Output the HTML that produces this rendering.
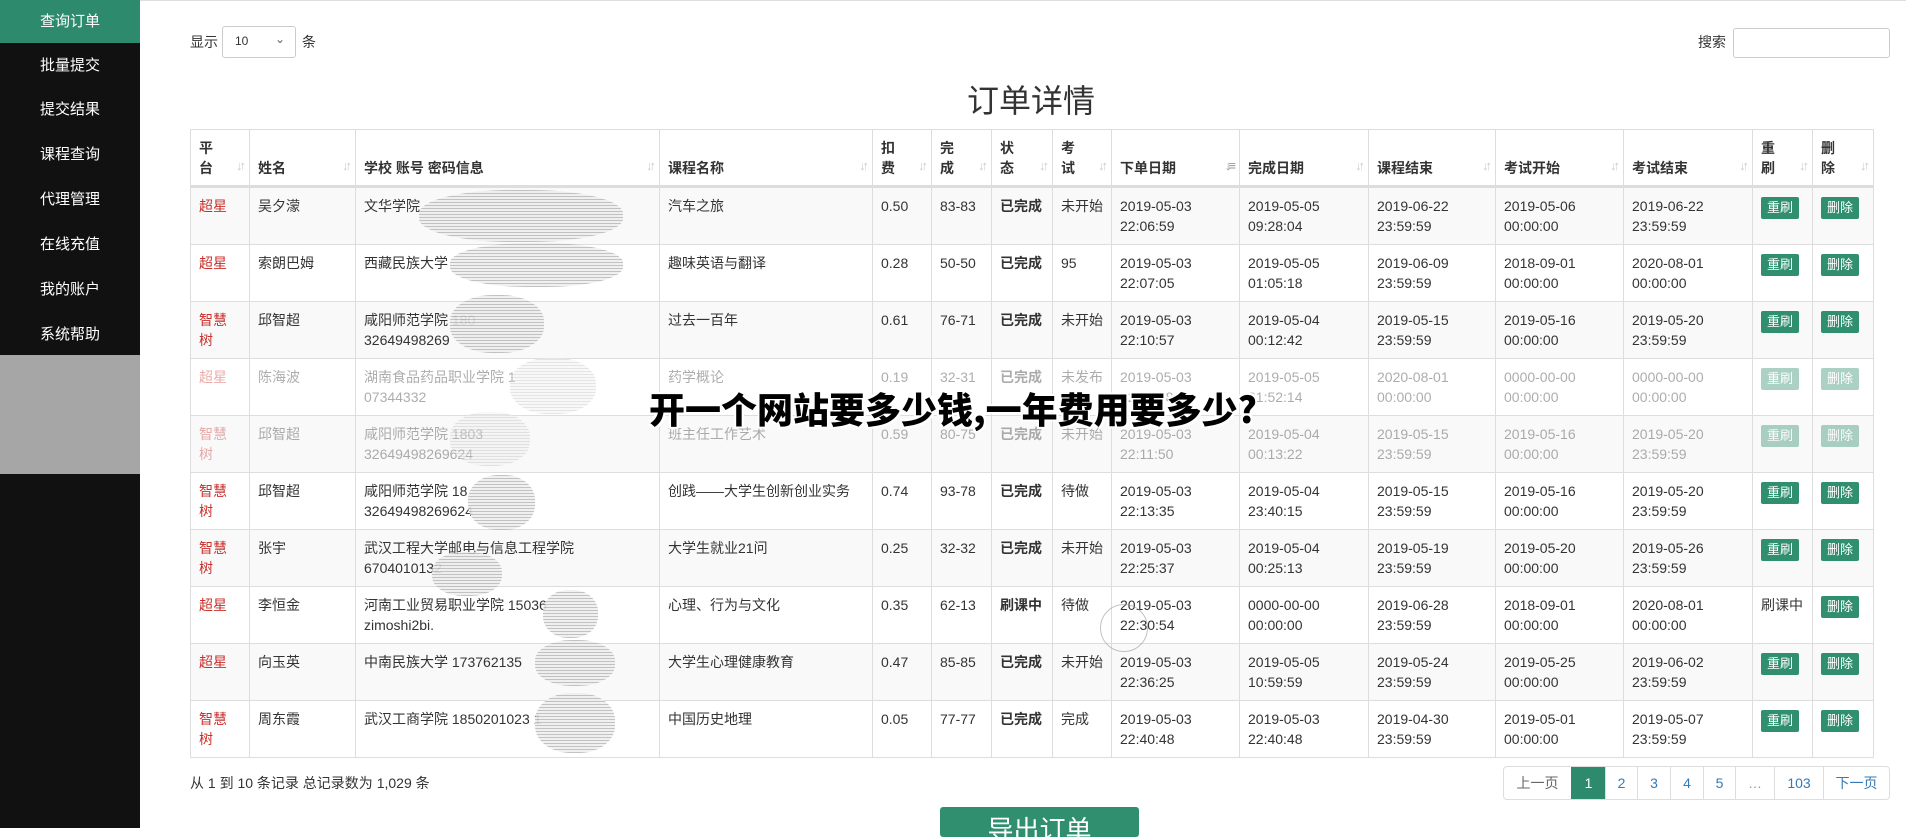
<!DOCTYPE html>
<html><head><meta charset="utf-8">
<style>
*{box-sizing:border-box;margin:0;padding:0}
body{width:1906px;height:828px;overflow:hidden;background:#fff;font-family:"Liberation Sans","Noto Sans CJK SC",sans-serif;color:#333;font-size:14px;position:relative}
.side{position:absolute;left:0;top:0;width:140px;height:828px;background:#111}
.side div{position:absolute;left:0;width:140px;height:45px;line-height:45px;color:#fff;font-size:15px;padding-left:40px}
.side .act{background:#2d8a6c;height:43px;top:0;line-height:43px}
.gray{position:absolute;left:0;top:355px;width:140px;height:119px;background:#a6a6a6}
.topline{position:absolute;left:140px;top:0;right:0;height:1px;background:#ddd}
.abs{position:absolute}
table{position:absolute;left:190px;top:129px;width:1683px;border-collapse:collapse;table-layout:fixed;font-size:14px}
td,th{border:1px solid #ddd;padding:8px 8px;vertical-align:top;line-height:20px;text-align:left;overflow:hidden}
th{font-weight:bold;color:#333;vertical-align:bottom;height:55px;position:relative;border-bottom:3px solid #ddd;padding-bottom:7px}
th i{position:absolute;right:6px;bottom:9px;color:#ccc;font-style:normal;font-size:13px;letter-spacing:-3px}
tbody tr{height:57px}
tbody td{height:57px}
tbody tr:nth-child(odd){background:#f9f9f9}
.r{color:#c9302c}
.b{font-weight:bold}
.btn{display:inline-block;background:#2f8f6e;color:#fff;font-size:13px;padding:2px 6px;border-radius:2px;line-height:18px;margin-top:1px}
.fade td{opacity:.4}
.blob{position:absolute;border-radius:45%;background:repeating-linear-gradient(0deg,#bbb 0 1px,#eee 1px 3px);opacity:.9}
.pg{position:absolute;top:766px;left:1503px;height:34px;display:flex;border:1px solid #ddd;border-radius:4px;overflow:hidden}
.pg span{border-left:1px solid #ddd;line-height:32px;text-align:center;color:#337ab7;font-size:14px}
.pg span:first-child{border-left:none;color:#666}
.title{position:absolute;left:0;width:1906px;top:382px;text-align:center;font-size:36px;font-weight:900;font-family:"Noto Sans CJK SC",sans-serif;color:#000;text-shadow:0 0 3px #fff,0 0 3px #fff,2px 2px 0 #fff,-2px -2px 0 #fff,2px -2px 0 #fff,-2px 2px 0 #fff}
</style></head><body>
<div class="side">
<div class="act">查询订单</div>
<div style="top:43px">批量提交</div>
<div style="top:87px">提交结果</div>
<div style="top:132px">课程查询</div>
<div style="top:177px">代理管理</div>
<div style="top:222px">在线充值</div>
<div style="top:267px">我的账户</div>
<div style="top:312px">系统帮助</div>
</div>
<div class="gray"></div>
<div class="topline"></div>
<div class="abs" style="left:190px;top:32px;font-size:14px">显示</div>
<div class="abs" style="left:222px;top:26px;width:74px;height:32px;border:1px solid #ccc;border-radius:3px;font-size:12px;padding:7px 12px">10<span style="position:absolute;right:10px;top:5px;color:#666">&#8964;</span></div>
<div class="abs" style="left:302px;top:32px">条</div>
<div class="abs" style="left:1698px;top:32px">搜索</div>
<div class="abs" style="left:1733px;top:28px;width:157px;height:30px;border:1px solid #ccc;border-radius:3px"></div>
<div class="abs" style="left:0;width:2062px;top:76px;text-align:center;font-size:32px;color:#333">订单详情</div>
<table>
<colgroup><col style="width:59px"><col style="width:106px"><col style="width:304px"><col style="width:213px"><col style="width:59px"><col style="width:60px"><col style="width:61px"><col style="width:59px"><col style="width:128px"><col style="width:129px"><col style="width:127px"><col style="width:128px"><col style="width:129px"><col style="width:60px"><col style="width:61px"></colgroup>
<thead><tr><th>平<br>台<i>↓↑</i></th><th>姓名<i>↓↑</i></th><th>学校 账号 密码信息<i>↓↑</i></th><th>课程名称<i>↓↑</i></th><th>扣<br>费<i>↓↑</i></th><th>完<br>成<i>↓↑</i></th><th>状<br>态<i>↓↑</i></th><th>考<br>试<i>↓↑</i></th><th>下单日期<i style="color:#999">↓≡</i></th><th>完成日期<i>↓↑</i></th><th>课程结束<i>↓↑</i></th><th>考试开始<i>↓↑</i></th><th>考试结束<i>↓↑</i></th><th>重<br>刷<i>↓↑</i></th><th>删<br>除<i>↓↑</i></th></tr></thead>
<tbody>
<tr><td class="r">超星</td><td>吴夕濛</td><td>文华学院</td><td>汽车之旅</td><td>0.50</td><td>83-83</td><td class="b">已完成</td><td>未开始</td><td>2019-05-03<br>22:06:59</td><td>2019-05-05<br>09:28:04</td><td>2019-06-22<br>23:59:59</td><td>2019-05-06<br>00:00:00</td><td>2019-06-22<br>23:59:59</td><td><span class="btn">重刷</span></td><td><span class="btn">删除</span></td></tr>
<tr><td class="r">超星</td><td>索朗巴姆</td><td>西藏民族大学</td><td>趣味英语与翻译</td><td>0.28</td><td>50-50</td><td class="b">已完成</td><td>95</td><td>2019-05-03<br>22:07:05</td><td>2019-05-05<br>01:05:18</td><td>2019-06-09<br>23:59:59</td><td>2018-09-01<br>00:00:00</td><td>2020-08-01<br>00:00:00</td><td><span class="btn">重刷</span></td><td><span class="btn">删除</span></td></tr>
<tr><td class="r">智慧<br>树</td><td>邱智超</td><td>咸阳师范学院 180<br>32649498269</td><td>过去一百年</td><td>0.61</td><td>76-71</td><td class="b">已完成</td><td>未开始</td><td>2019-05-03<br>22:10:57</td><td>2019-05-04<br>00:12:42</td><td>2019-05-15<br>23:59:59</td><td>2019-05-16<br>00:00:00</td><td>2019-05-20<br>23:59:59</td><td><span class="btn">重刷</span></td><td><span class="btn">删除</span></td></tr>
<tr class="fade"><td class="r">超星</td><td>陈海波</td><td>湖南食品药品职业学院 1<br>07344332</td><td>药学概论</td><td>0.19</td><td>32-31</td><td class="b">已完成</td><td>未发布</td><td>2019-05-03<br>22:11:08</td><td>2019-05-05<br>21:52:14</td><td>2020-08-01<br>00:00:00</td><td>0000-00-00<br>00:00:00</td><td>0000-00-00<br>00:00:00</td><td><span class="btn">重刷</span></td><td><span class="btn">删除</span></td></tr>
<tr class="fade"><td class="r">智慧<br>树</td><td>邱智超</td><td>咸阳师范学院 1803<br>32649498269624</td><td>班主任工作艺术</td><td>0.59</td><td>80-75</td><td class="b">已完成</td><td>未开始</td><td>2019-05-03<br>22:11:50</td><td>2019-05-04<br>00:13:22</td><td>2019-05-15<br>23:59:59</td><td>2019-05-16<br>00:00:00</td><td>2019-05-20<br>23:59:59</td><td><span class="btn">重刷</span></td><td><span class="btn">删除</span></td></tr>
<tr><td class="r">智慧<br>树</td><td>邱智超</td><td>咸阳师范学院 18<br>32649498269624</td><td>创践——大学生创新创业实务</td><td>0.74</td><td>93-78</td><td class="b">已完成</td><td>待做</td><td>2019-05-03<br>22:13:35</td><td>2019-05-04<br>23:40:15</td><td>2019-05-15<br>23:59:59</td><td>2019-05-16<br>00:00:00</td><td>2019-05-20<br>23:59:59</td><td><span class="btn">重刷</span></td><td><span class="btn">删除</span></td></tr>
<tr><td class="r">智慧<br>树</td><td>张宇</td><td>武汉工程大学邮电与信息工程学院<br>6704010132</td><td>大学生就业21问</td><td>0.25</td><td>32-32</td><td class="b">已完成</td><td>未开始</td><td>2019-05-03<br>22:25:37</td><td>2019-05-04<br>00:25:13</td><td>2019-05-19<br>23:59:59</td><td>2019-05-20<br>00:00:00</td><td>2019-05-26<br>23:59:59</td><td><span class="btn">重刷</span></td><td><span class="btn">删除</span></td></tr>
<tr><td class="r">超星</td><td>李恒金</td><td>河南工业贸易职业学院 15036<br>zimoshi2bi.</td><td>心理、行为与文化</td><td>0.35</td><td>62-13</td><td class="b">刷课中</td><td>待做</td><td>2019-05-03<br>22:30:54</td><td>0000-00-00<br>00:00:00</td><td>2019-06-28<br>23:59:59</td><td>2018-09-01<br>00:00:00</td><td>2020-08-01<br>00:00:00</td><td>刷课中</td><td><span class="btn">删除</span></td></tr>
<tr><td class="r">超星</td><td>向玉英</td><td>中南民族大学 173762135</td><td>大学生心理健康教育</td><td>0.47</td><td>85-85</td><td class="b">已完成</td><td>未开始</td><td>2019-05-03<br>22:36:25</td><td>2019-05-05<br>10:59:59</td><td>2019-05-24<br>23:59:59</td><td>2019-05-25<br>00:00:00</td><td>2019-06-02<br>23:59:59</td><td><span class="btn">重刷</span></td><td><span class="btn">删除</span></td></tr>
<tr><td class="r">智慧<br>树</td><td>周东霞</td><td>武汉工商学院 1850201023 1</td><td>中国历史地理</td><td>0.05</td><td>77-77</td><td class="b">已完成</td><td>完成</td><td>2019-05-03<br>22:40:48</td><td>2019-05-03<br>22:40:48</td><td>2019-04-30<br>23:59:59</td><td>2019-05-01<br>00:00:00</td><td>2019-05-07<br>23:59:59</td><td><span class="btn">重刷</span></td><td><span class="btn">删除</span></td></tr>
</tbody></table>
<div class="blob" style="left:419px;top:190px;width:204px;height:52px"></div>
<div class="blob" style="left:450px;top:243px;width:173px;height:44px"></div>
<div class="blob" style="left:450px;top:295px;width:94px;height:58px"></div>
<div class="blob" style="left:510px;top:358px;width:86px;height:56px;opacity:.4"></div>
<div class="blob" style="left:450px;top:412px;width:80px;height:54px;opacity:.4"></div>
<div class="blob" style="left:468px;top:475px;width:67px;height:55px"></div>
<div class="blob" style="left:432px;top:552px;width:70px;height:44px"></div>
<div class="blob" style="left:543px;top:590px;width:55px;height:48px"></div>
<div class="blob" style="left:535px;top:640px;width:80px;height:46px"></div>
<div class="blob" style="left:535px;top:693px;width:80px;height:60px"></div>
<div class="abs" style="left:1100px;top:604px;width:48px;height:48px;border:1px solid #999;border-radius:50%;opacity:.6"></div>
<div class="abs" style="left:190px;top:773px;font-size:14px">从 1 到 10 条记录 总记录数为 1,029 条</div>
<div class="pg">
<span style="width:67px">上一页</span><span style="width:34px;background:#2d8a6c;color:#fff;border-color:#2d8a6c">1</span><span style="width:32px">2</span><span style="width:33px">3</span><span style="width:33px">4</span><span style="width:32px">5</span><span style="width:39px;color:#999">…</span><span style="width:49px">103</span><span style="width:66px">下一页</span>
</div>
<div class="abs" style="left:940px;top:807px;width:199px;height:30px;background:#2f8f6e;border-radius:3px;color:#fff;font-size:26px;text-align:center;line-height:46px;overflow:hidden">导出订单</div>
<div class="title">开一个网站要多少钱,一年费用要多少?</div>
</body></html>
